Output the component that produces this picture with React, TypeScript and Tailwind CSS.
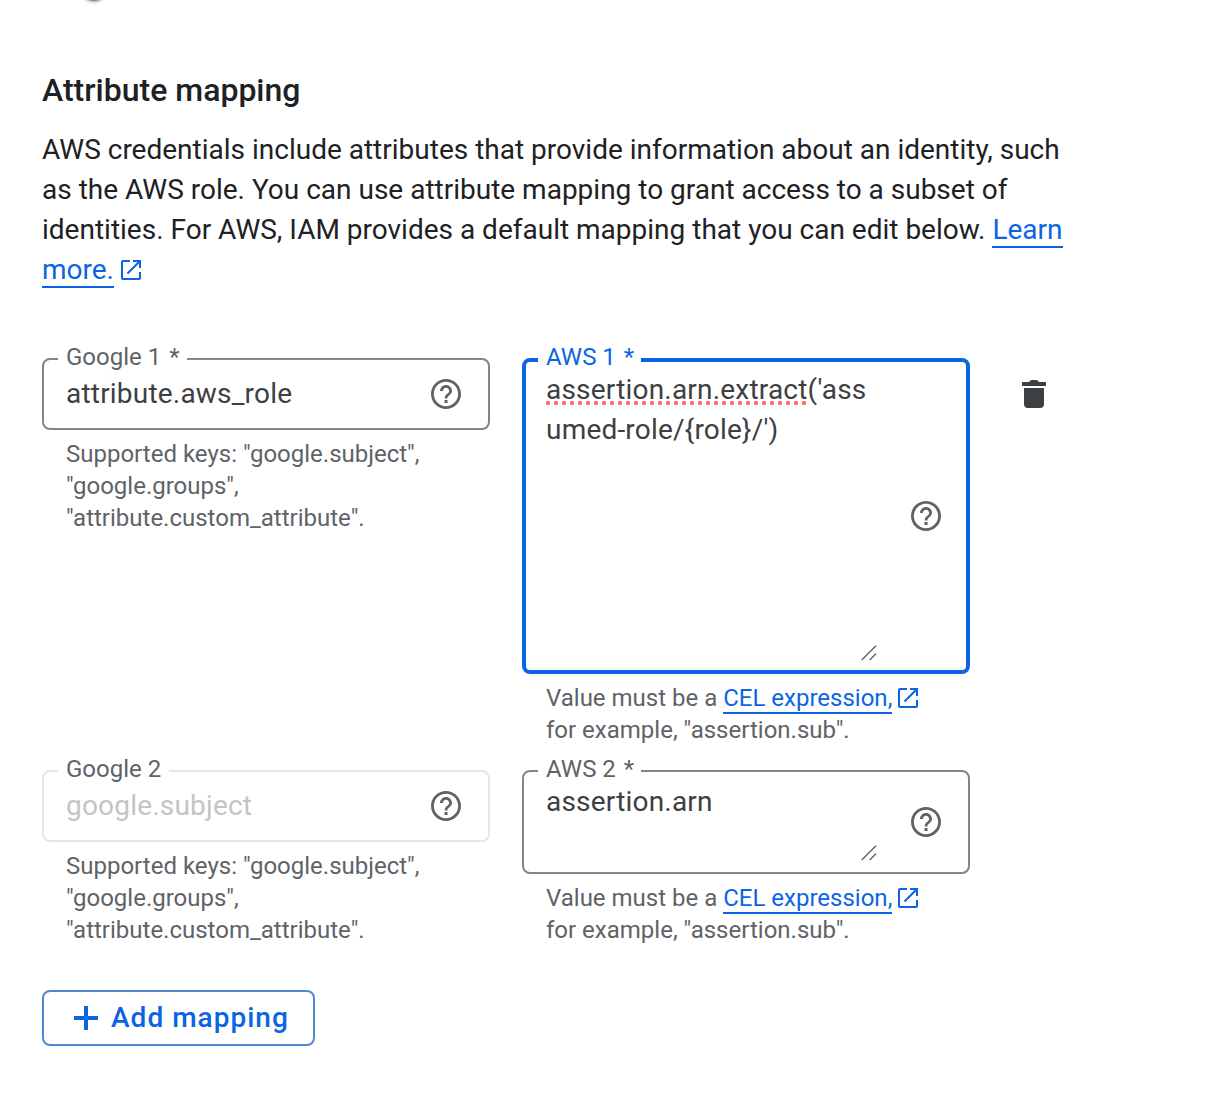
import React from "react";

function HelpIcon() {
  return (
    <svg viewBox="0 0 24 24" className="size-9 shrink-0" fill="#5f6368">
      <path d="M11 18h2v-2h-2v2zm1-16C6.480 2 2 6.480 2 12s4.480 10 10 10 10-4.480 10-10S17.520 2 12 2zm0 18.100c-4.460 0-8.100-3.640-8.100-8.100s3.640-8.100 8.100-8.100 8.100 3.640 8.100 8.100-3.640 8.100-8.100 8.100zm0-14.100c-2.210 0-4 1.790-4 4h1.900c0-1.100.95-2.100 2.100-2.100s2.100 1 2.100 2.100c0 2-3 1.750-3 5h1.800c0-2.250 3.100-2.500 3.100-5 0-2.210-1.790-4-4-4z" />
    </svg>
  );
}

function ExternalIcon({ className = "" }: { className?: string }) {
  return (
    <svg viewBox="0 0 20 20" className={"inline-block size-5 " + className} fill="none" stroke="#0b65e3" strokeWidth="2">
      <path d="M9 1H2a1 1 0 0 0-1 1v16a1 1 0 0 0 1 1h16a1 1 0 0 0 1-1v-6" />
      <path d="M12 1h7v7M19 1 6.500 13.500" />
    </svg>
  );
}

function Grip() {
  return (
    <svg viewBox="0 0 16 16" className="size-4" stroke="#5f6368" strokeWidth="1.4">
      <path d="M.7 15 15 .7M8.700 15 15 8.700" />
    </svg>
  );
}

function Label({ text, required = false, className }: { text: string; required?: boolean; className: string }) {
  return (
    <span className={"absolute bg-white pl-2 text-[24px] leading-8 whitespace-nowrap " + (required ? "pr-[7px] " : "pr-2 ") + className}>
      {text}
      {required && <span className="ml-[2px]"> *</span>}
    </span>
  );
}

function GoogleField({ label, value, required = false, disabled = false }: { label: string; value: string; required?: boolean; disabled?: boolean }) {
  return (
    <div className="w-[448px]">
      <div className={"relative flex h-[72px] items-center justify-between rounded-[8px] border-2 pr-6 pl-[22px] " + (disabled ? "border-[#e6e6e6]" : "border-[#80868b]")}>
        <Label text={label} required={required} className="-top-[19px] left-[14px] text-[#5f6368]" />
        <span className={"text-[28px] leading-10 tracking-[0.2px] " + (disabled ? "text-[#c3c4c5]" : "text-[#3c4043]")}>{value}</span>
        <HelpIcon />
      </div>
      <p className="mt-2 pl-6 text-[24px] leading-8 text-[#5f6368]">
        Supported keys: "google.subject",
        <br />
        "google.groups",
        <br />
        "attribute.custom_attribute".
      </p>
    </div>
  );
}

function CelHint() {
  return (
    <p className="mt-2 pl-6 text-[24px] leading-8 whitespace-nowrap text-[#5f6368]">
      Value must be a{" "}
      <a className="inline-block h-8 border-b-2 border-[#0b65e3] text-[#0b65e3]">CEL expression,</a>
      <ExternalIcon className="-mt-[3px] ml-[6px]" />
      <br />
      for example, "assertion.sub".
    </p>
  );
}

export default function App() {
  return (
    <main className="h-[1094px] w-[1212px] overflow-hidden bg-white px-[42px] font-['Roboto',sans-serif] text-[#202124]">
      <div className="flex h-[70px] items-start">
        <span className="-mt-[27px] ml-[38px] size-7 rounded-full bg-[#8a8a8a] shadow-[0_1px_3px_rgba(0,0,0,0.35)]" />
      </div>
      <h1 className="text-[32px] leading-10 font-medium">Attribute mapping</h1>
      <p className="mt-5 text-[28px] leading-10 whitespace-nowrap">
        <span className="block">AWS credentials include attributes that provide information about an identity, such</span>
        <span className="block">as the AWS role. You can use attribute mapping to grant access to a subset of</span>
        <span className="block h-10">
          identities. For AWS, IAM provides a default mapping that you can edit below.{" "}
          <a className="inline-block h-[38px] border-b-2 border-[#0b65e3] text-[#0b65e3]">Learn</a>
        </span>
        <span className="block h-10">
          <a className="inline-block h-[38px] border-b-2 border-[#0b65e3] text-[#0b65e3]">more.</a>
          <ExternalIcon className="-mt-1 ml-[7px]" />
        </span>
      </p>

      <section className="mt-[68px] flex h-[412px] gap-8">
        <GoogleField label="Google 1" required value="attribute.aws_role" />
        <div className="w-[448px]">
          <div className="relative flex h-[316px] items-center justify-between rounded-[8px] border-4 border-[#0b65e3] pr-[22px] pl-5">
            <Label text="AWS 1" required className="-top-[21px] left-3 text-[#0b65e3]" />
            <div className="flex h-full w-[331px] flex-col justify-between pt-2 pb-[9px] text-[28px] leading-10 tracking-[0.2px] text-[#3c4043]">
              <p>
                <span className="relative inline-block">
                  assertion.arn.extract
                  <span className="absolute bottom-[5px] -left-[2px] h-1 w-[264px] bg-[radial-gradient(circle_at_center,#ff6961_1.9px,transparent_2.4px)] bg-[size:8px_4px] bg-repeat-x" />
                </span>
                ('ass
                <br />
                umed-role/&#123;role&#125;/')
              </p>
              <div className="flex justify-end"><Grip /></div>
            </div>
            <HelpIcon />
          </div>
          <CelHint />
        </div>
        <button className="mt-5 ml-4 h-8">
          <svg viewBox="0 0 32 32" className="size-8" fill="#3c4043">
            <path d="M4 4h7q1-2 3-2h4q2 0 3 2h7v4H4zM6 10h20v16a4 4 0 0 1-4 4H10a4 4 0 0 1-4-4z" />
          </svg>
        </button>
      </section>

      <section className="flex h-[220px] gap-8">
        <GoogleField label="Google 2" value="google.subject" disabled />
        <div className="w-[448px]">
          <div className="relative flex h-[104px] items-center justify-between rounded-[8px] border-2 border-[#80868b] pr-6 pl-[22px]">
            <Label text="AWS 2" required className="-top-[19px] left-[14px] text-[#5f6368]" />
            <div className="flex h-full w-[331px] flex-col justify-between pt-[10px] pb-[11px] text-[28px] leading-10 tracking-[0.2px] text-[#3c4043]">
              <p>assertion.arn</p>
              <div className="-mt-4 flex justify-end"><Grip /></div>
            </div>
            <HelpIcon />
          </div>
          <CelHint />
        </div>
      </section>

      <button className="flex h-14 w-[273px] items-center rounded-[8px] border-2 border-[#5486d2] pl-[30px] text-[28px] font-medium text-[#0b65e3]">
        <svg viewBox="0 0 24 24" className="size-6" stroke="#0b65e3" strokeWidth="4">
          <path d="M12 0v24M0 12h24" />
        </svg>
        <span className="ml-[13px] tracking-[1.02px] whitespace-nowrap">Add mapping</span>
      </button>
    </main>
  );
}
